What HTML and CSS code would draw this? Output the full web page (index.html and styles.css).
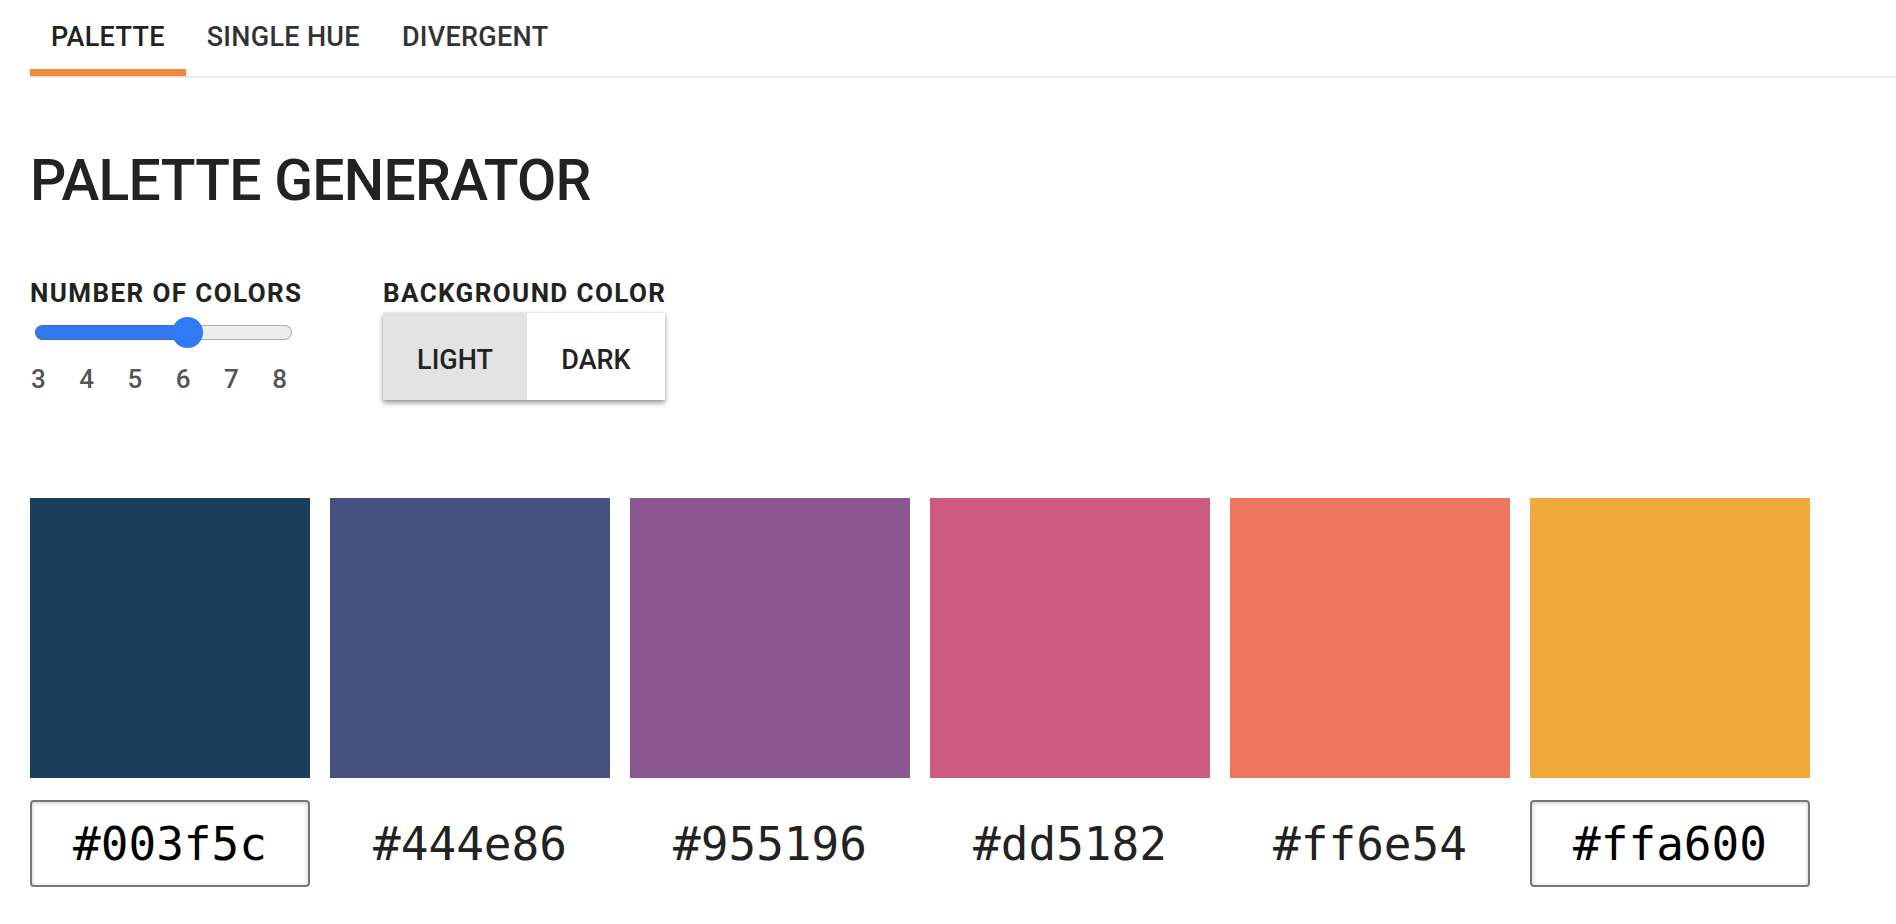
FILE: index.html
```html
<!DOCTYPE html>
<html lang="en">
<head>
<meta charset="utf-8">
<title>Palette Generator</title>
<link rel="stylesheet" href="styles.css">
</head>
<body>
<div class="page">
  <nav class="tabs">
    <a class="tab active">PALETTE</a>
    <a class="tab">SINGLE HUE</a>
    <a class="tab">DIVERGENT</a>
  </nav>

  <h1 class="title">PALETTE GENERATOR</h1>

  <div class="controls">
    <div class="group group-count">
      <div class="label">NUMBER OF COLORS</div>
      <div class="slider">
        <div class="track">
          <div class="fill"></div>
          <div class="rest"></div>
        </div>
        <div class="thumb"></div>
      </div>
      <div class="ticks">
        <span>3</span><span>4</span><span>5</span><span>6</span><span>7</span><span>8</span>
      </div>
    </div>
    <div class="group">
      <div class="label">BACKGROUND COLOR</div>
      <div class="toggle">
        <div class="opt opt-light selected">LIGHT</div>
        <div class="opt opt-dark">DARK</div>
      </div>
    </div>
  </div>

  <div class="swatches">
    <div class="swatch c1"></div>
    <div class="swatch c2"></div>
    <div class="swatch c3"></div>
    <div class="swatch c4"></div>
    <div class="swatch c5"></div>
    <div class="swatch c6"></div>
  </div>

  <div class="hexes">
    <div class="hex input">#003f5c</div>
    <div class="hex">#444e86</div>
    <div class="hex">#955196</div>
    <div class="hex">#dd5182</div>
    <div class="hex">#ff6e54</div>
    <div class="hex input">#ffa600</div>
  </div>
</div>
</body>
</html>
```

FILE: styles.css
```css
html, body {
  margin: 0;
  padding: 0;
  background: #ffffff;
}

body {
  font-family: Roboto, "Liberation Sans", sans-serif;
  color: #222222;
}

.page {
  padding-left: 30px;
}

/* Tabs */
.tabs {
  display: flex;
  border-bottom: 2px solid #e9e9e9;
}

.tab {
  display: block;
  padding: 23px 21px 18px;
  line-height: 28px;
  font-size: 27px;
  font-weight: 500;
  color: #333333;
  border-bottom: 7px solid transparent;
  letter-spacing: 0.3px;
}

.tab.active {
  color: #222222;
  border-bottom-color: #f0883d;
}

/* Title */
.title {
  margin: 74px 0 0;
  font-size: 57px;
  line-height: 57px;
  font-weight: 500;
  letter-spacing: -0.7px;
  color: #222222;
}

/* Controls */
.controls {
  display: flex;
  margin-top: 71px;
}

.group-count {
  flex: 0 0 353px;
}

.label {
  font-size: 26px;
  line-height: 26px;
  font-weight: 700;
  letter-spacing: 1.4px;
  color: #222222;
}

.slider {
  position: relative;
  width: 257px;
  height: 31px;
  margin: 11px 0 0 5px;
  display: flex;
  align-items: center;
}

.track {
  flex: 1;
  display: flex;
  height: 15px;
}

.fill {
  width: 152px;
  background: #3079f3;
  border: 1px solid #3f6cb9;
  border-right: none;
  border-radius: 8px 0 0 8px;
}

.rest {
  flex: 1;
  background: #eeeeee;
  border: 1px solid #adadad;
  border-left: none;
  border-radius: 0 8px 8px 0;
}

.thumb {
  position: absolute;
  left: 137px;
  top: 0;
  width: 31px;
  height: 31px;
  border-radius: 50%;
  background: #2f7af5;
}

.ticks {
  display: flex;
  justify-content: space-between;
  width: 256px;
  margin: 18px 0 0 1px;
  font-size: 26px;
  line-height: 26px;
  font-weight: 500;
  color: #555555;
}

.toggle {
  display: flex;
  width: fit-content;
  margin-top: 7px;
  box-shadow: 0 3px 5px rgba(0, 0, 0, 0.38), 0 0 2px rgba(0, 0, 0, 0.18);
}

.opt {
  height: 87px;
  box-sizing: border-box;
  padding-top: 7px;
  display: flex;
  align-items: center;
  justify-content: center;
  font-size: 27px;
  font-weight: 500;
  color: #222222;
  background: #ffffff;
}

.opt-light {
  width: 144px;
}

.opt-dark {
  width: 138px;
}

.opt.selected {
  background: #e3e3e3;
}

/* Swatches */
.swatches {
  display: flex;
  gap: 20px;
  margin-top: 98px;
}

.swatch {
  width: 280px;
  height: 280px;
}

.c1 { background: #1a3f5a; }
.c2 { background: #465081; }
.c3 { background: #8c5690; }
.c4 { background: #cb5b80; }
.c5 { background: #ed775e; }
.c6 { background: #f0aa3c; }

.hexes {
  display: flex;
  gap: 20px;
  margin-top: 22px;
}

.hex {
  width: 280px;
  height: 87px;
  box-sizing: border-box;
  border: 2px solid transparent;
  border-radius: 4px;
  display: flex;
  align-items: center;
  justify-content: center;
  font-family: "DejaVu Sans Mono", "Liberation Mono", monospace;
  font-size: 46px;
  color: #222222;
}

.hex.input {
  border-color: #777777;
  color: #000000;
  box-shadow: inset 0 1px 4px rgba(0, 0, 0, 0.22);
}
```
